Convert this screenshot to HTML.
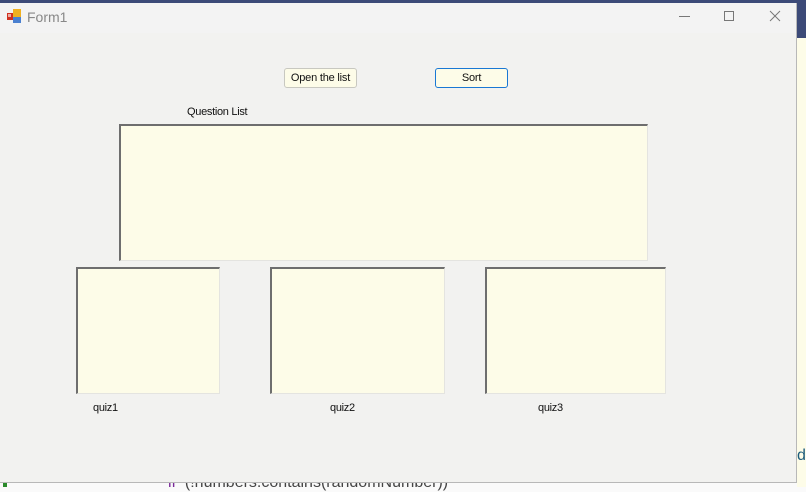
<!DOCTYPE html>
<html><head><style>
body{margin:0;width:806px;height:487px;overflow:hidden;background:#fafafa;position:relative;font-family:"Liberation Sans",sans-serif;font-size:11px;color:#000}
.a{position:absolute}
.win{left:0;top:3px;width:796px;height:479px;background:#f2f2f0;border-right:1px solid #b8b8b8;border-bottom:1px solid #b8b8b8}
.lb{position:absolute;background:#fdfce8;border-top:2px solid #6e6e6e;border-left:2px solid #6e6e6e;border-right:1px solid #e4e4e0;border-bottom:1px solid #e4e4e0;box-sizing:border-box}
.btn{position:absolute;background:#fdfce8;box-sizing:border-box;border-radius:3px;text-align:center;line-height:18px;font-size:11px;letter-spacing:-0.2px;color:#111}
.t{letter-spacing:-0.3px;color:#111}
</style></head><body>
<div class="a" style="left:0;top:0;width:806px;height:3px;background:#3c4a78"></div>
<div class="a" style="left:797px;top:0;width:9px;height:38px;background:#3c4a78"></div>
<div class="a" style="left:797px;top:38px;width:9px;height:449px;background:#fdfce8"></div>
<div class="a" style="left:168px;top:474px;font-size:16px;color:#444;white-space:nowrap"><span style="color:#7a2a9a">if</span>&nbsp; (!numbers.contains(randomNumber))</div>
<div class="a" style="left:3px;top:482px;width:4px;height:5px;background:#2a8a2a"></div>
<div class="a" style="left:797px;top:447px;font-size:16px;color:#1a5a7a">d</div>
<div class="a win"></div>
<div class="a" style="left:0;top:3px;width:796px;height:30px;background:#f3f3f3"></div>
<svg class="a" style="left:7px;top:9px" width="14" height="14"><rect x="0" y="4" width="6" height="7" fill="#d03020"/><rect x="6" y="0" width="8" height="8" fill="#f0b020"/><rect x="6" y="8" width="8" height="6" fill="#4a80d0"/><rect x="1" y="5" width="3" height="3" fill="#fff" opacity=".6"/></svg>
<div class="a" style="left:27px;top:9px;font-size:14px;color:#888">Form1</div>
<svg class="a" style="left:675px;top:8px" width="110" height="16" stroke="#777" fill="none" stroke-width="1"><line x1="4" y1="8.5" x2="15" y2="8.5"/><rect x="49.5" y="3.5" width="9" height="9"/><line x1="95" y1="3" x2="105" y2="13"/><line x1="105" y1="3" x2="95" y2="13"/></svg>
<div class="btn" style="left:284px;top:68px;width:73px;height:20px;border:1px solid #c8c8c0">Open the list</div>
<div class="btn" style="left:435px;top:68px;width:73px;height:20px;border:1px solid #1a78d4">Sort</div>
<div class="a t" style="left:187px;top:106px">Question List</div>
<div class="lb" style="left:119px;top:124px;width:529px;height:137px"></div>
<div class="lb" style="left:76px;top:267px;width:144px;height:127px"></div>
<div class="lb" style="left:270px;top:267px;width:175px;height:127px"></div>
<div class="lb" style="left:485px;top:267px;width:181px;height:127px"></div>
<div class="a t" style="left:93px;top:402px">quiz1</div>
<div class="a t" style="left:330px;top:402px">quiz2</div>
<div class="a t" style="left:538px;top:402px">quiz3</div>
</body></html>
